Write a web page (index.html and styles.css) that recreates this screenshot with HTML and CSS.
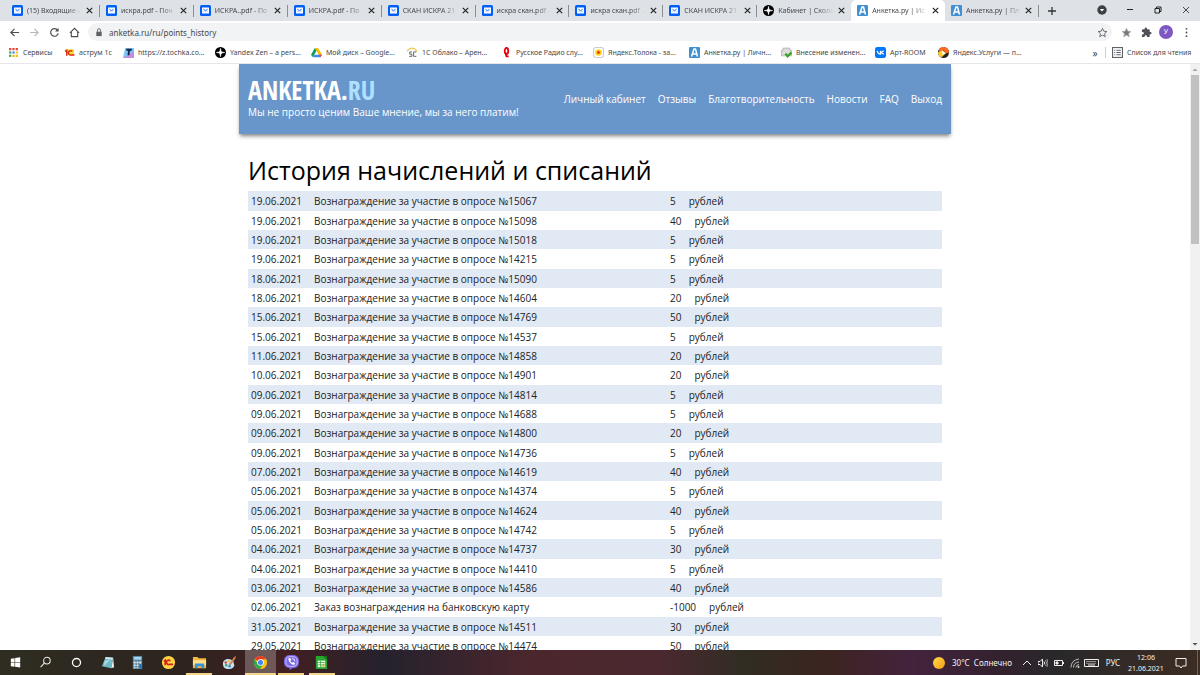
FILE: index.html
```html
<!DOCTYPE html>
<html lang="ru">
<head>
    <meta charset="UTF-8">
    <meta name="viewport" content="width=device-width, initial-scale=1.0">
    <title>Анкетка.ру | История начислений и списаний</title>
    <link rel="stylesheet" href="styles.css">
</head>
<body>

    <!-- shared icons -->
    <svg class="sprite" aria-hidden="true">
        <symbol id="mail" viewBox="0 0 22 22">
            <rect width="22" height="22" rx="3" fill="#005ff9"/>
            <rect x="4" y="5" width="14" height="12" fill="#fff"/>
            <path d="M7 8.500l4 3 4-3" fill="none" stroke="#005ff9" stroke-width="2"/>
            <path d="M7 14l1.500-1.500M15 14l-1.500-1.500" fill="none" stroke="#5b98fb" stroke-width="1.400"/>
        </symbol>
        <symbol id="zen" viewBox="0 0 22 22">
            <circle cx="11" cy="11" r="11" fill="#000"/>
            <path d="M11 3c.4 6 2 7.600 8 8-6 .4-7.600 2-8 8-.4-6-2-7.600-8-8 6-.4 7.600-2 8-8z" fill="#fff" stroke="#fff" stroke-width="1.500"/>
        </symbol>
        <symbol id="anketka" viewBox="0 0 22 22">
            <rect width="22" height="22" rx="2" fill="#3f8fd2"/>
            <path d="M5 19L10 4h3l4 15M7 14h8" fill="none" stroke="#fff" stroke-width="3"/>
        </symbol>
        <symbol id="close" viewBox="0 0 10 10">
            <path d="M2 2l6 6M8 2l-6 6" fill="none" stroke="currentColor" stroke-width="1.3"/>
        </symbol>
        <symbol id="star" viewBox="0 0 24 24">
            <path d="M12 3l2.8 6.2 6.7.7-5 4.5 1.4 6.6-5.900-3.400L6.100 21l1.400-6.600-5-4.500 6.700-.7z" stroke="currentColor" stroke-width="2"/>
        </symbol>
    </svg>

    <header class="browser">
        <div class="tab-bar">
            <div class="tabs">
                <div class="tab"><svg class="icon"><use href="#mail"/></svg><span class="tab-title">(15) Входящие -</span><button class="tab-close" aria-label="Закрыть"><svg><use href="#close"/></svg></button></div>
                <div class="tab"><svg class="icon"><use href="#mail"/></svg><span class="tab-title">искра.pdf - Поч</span><button class="tab-close" aria-label="Закрыть"><svg><use href="#close"/></svg></button></div>
                <div class="tab"><svg class="icon"><use href="#mail"/></svg><span class="tab-title">ИСКРА..pdf - По</span><button class="tab-close" aria-label="Закрыть"><svg><use href="#close"/></svg></button></div>
                <div class="tab"><svg class="icon"><use href="#mail"/></svg><span class="tab-title">ИСКРА.pdf - По</span><button class="tab-close" aria-label="Закрыть"><svg><use href="#close"/></svg></button></div>
                <div class="tab"><svg class="icon"><use href="#mail"/></svg><span class="tab-title">СКАН ИСКРА 21</span><button class="tab-close" aria-label="Закрыть"><svg><use href="#close"/></svg></button></div>
                <div class="tab"><svg class="icon"><use href="#mail"/></svg><span class="tab-title">искра скан.pdf -</span><button class="tab-close" aria-label="Закрыть"><svg><use href="#close"/></svg></button></div>
                <div class="tab"><svg class="icon"><use href="#mail"/></svg><span class="tab-title">искра скан.pdf -</span><button class="tab-close" aria-label="Закрыть"><svg><use href="#close"/></svg></button></div>
                <div class="tab"><svg class="icon"><use href="#mail"/></svg><span class="tab-title">СКАН ИСКРА 21</span><button class="tab-close" aria-label="Закрыть"><svg><use href="#close"/></svg></button></div>
                <div class="tab before-active"><svg class="icon"><use href="#zen"/></svg><span class="tab-title">Кабинет | Сколь</span><button class="tab-close" aria-label="Закрыть"><svg><use href="#close"/></svg></button></div>
                <div class="tab active"><svg class="icon"><use href="#anketka"/></svg><span class="tab-title">Анкетка.ру | Ис</span><button class="tab-close" aria-label="Закрыть"><svg><use href="#close"/></svg></button></div>
                <div class="tab"><svg class="icon"><use href="#anketka"/></svg><span class="tab-title">Анкетка.ру | Пл</span><button class="tab-close" aria-label="Закрыть"><svg><use href="#close"/></svg></button></div>
            </div>
            <button class="new-tab" aria-label="Новая вкладка"><svg viewBox="0 0 10 10"><path d="M5 1v8M1 5h8" stroke="currentColor" stroke-width="1.3"/></svg></button>
            <div class="window-buttons">
                <button aria-label="Поиск вкладок"><svg viewBox="0 0 10 10"><circle cx="5" cy="5" r="4.700" fill="#3c4043"/><path d="M2.800 4h4.400L5 6.500z" fill="#fff"/></svg></button>
                <button aria-label="Свернуть"><svg viewBox="0 0 10 10"><path d="M2 4.500h6" stroke="#222"/></svg></button>
                <button aria-label="Восстановить"><svg viewBox="0 0 10 10" fill="none" stroke="#222"><path d="M2 3.500h4.500V8H2zM3.500 3.500V2H8v4.500H6.500"/></svg></button>
                <button aria-label="Закрыть окно"><svg viewBox="0 0 10 10"><path d="M2 2l6 6M8 2l-6 6" stroke="#222" stroke-width=".8"/></svg></button>
            </div>
        </div>

        <div class="toolbar">
            <button class="tool" aria-label="Назад"><svg viewBox="0 0 12 12"><path d="M11 6H2M6 2L2 6l4 4" fill="none" stroke="#4a4d51" stroke-width="1.300"/></svg></button>
            <button class="tool" aria-label="Вперёд"><svg viewBox="0 0 12 12"><path d="M1 6h9M6 2l4 4-4 4" fill="none" stroke="#b5b8bc" stroke-width="1.300"/></svg></button>
            <button class="tool" aria-label="Обновить"><svg viewBox="0 0 12 12"><path d="M9.500 3.500A4.200 4.200 0 1 0 10.100 7" fill="none" stroke="#4a4d51" stroke-width="1.300"/><path d="M10.500 1v4h-4z" fill="#4a4d51"/></svg></button>
            <button class="tool" aria-label="Домой"><svg viewBox="0 0 12 12"><path d="M1 6.500L6 1.500l5 5M2.500 5.500v5h7v-5" fill="none" stroke="#4a4d51" stroke-width="1.200"/></svg></button>
            <div class="omnibox">
                <svg class="lock" viewBox="0 0 8 10"><path d="M1 4h6v5H1z" fill="#5f6368"/><path d="M2.300 4V2.500a1.700 1.700 0 0 1 3.400 0V4" fill="none" stroke="#5f6368"/></svg>
                <input class="url" type="text" value="anketka.ru/ru/points_history" aria-label="Адресная строка">
                <button class="tool" aria-label="В закладки"><svg fill="none" color="#5f6368"><use href="#star"/></svg></button>
            </div>
            <button class="tool" aria-label="Избранное"><svg fill="#777" color="#aaa"><use href="#star"/></svg></button>
            <button class="tool" aria-label="Расширения"><svg viewBox="0 0 24 24"><path d="M20.500 11H19V7a2 2 0 0 0-2-2h-4V3.500a2.500 2.500 0 0 0-5 0V5H4a2 2 0 0 0-2 2v3.800h1.500a2.700 2.700 0 0 1 0 5.400H2V20a2 2 0 0 0 2 2h3.800v-1.500a2.700 2.700 0 0 1 5.400 0V22H17a2 2 0 0 0 2-2v-4h1.500a2.500 2.500 0 0 0 0-5z" fill="#4f5358"/></svg></button>
            <button class="tool" aria-label="Профиль"><span class="avatar">У</span></button>
            <button class="tool" aria-label="Меню"><svg viewBox="0 0 12 12" fill="#4a4d51"><circle cx="6" cy="2" r="1"/><circle cx="6" cy="6" r="1"/><circle cx="6" cy="10" r="1"/></svg></button>
        </div>

        <nav class="bookmarks" aria-label="Закладки">
            <a href="#"><svg class="icon" viewBox="0 0 10 10"><g fill="#ea4335"><path d="M1 1h2v2H1zM4 1h2v2H4zM7 1h2v2H7z"/></g><path d="M1 4h2v2H1z" fill="#34a853"/><path d="M4 4h2v2H4z" fill="#4285f4"/><path d="M7 4h2v2H7zM7 7h2v2H7zM4 7h2v2H4z" fill="#fbbc04"/><path d="M1 7h2v2H1z" fill="#34a853"/></svg>Сервисы</a>
            <a href="#"><svg class="icon" viewBox="0 0 10 10"><path d="M1 2h8v5H4z" fill="#ffdd2d"/><path d="M1 4l1.500-1v5M7.500 4a2 2 0 1 0-1 3.300h3" fill="none" stroke="#d9230f" stroke-width="1.300"/></svg>аструм 1с</a>
            <a href="#"><svg class="icon" viewBox="0 0 10 10"><path d="M2 1h8v9H0z" fill="#77c6f3"/><path d="M5 7l5-3v6H0z" fill="#c58ce4"/><path d="M3 2.500h5M5.500 2.500L5 7.500" stroke="#15234d" stroke-width="1.700"/></svg>https://z.tochka.co...</a>
            <a href="#"><svg class="icon"><use href="#zen"/></svg>Yandex Zen – a pers...</a>
            <a href="#"><svg class="icon" viewBox="0 0 10 10"><path d="M3.500 1h3L10 7H7z" fill="#fbbc04"/><path d="M3.500 1L5 3.500 1.700 9.300 0 7z" fill="#0f9d58"/><path d="M3.200 7H10L8.500 9.300H1.700z" fill="#4285f4"/><path d="M7 7h3L8.500 9.300z" fill="#ea4335"/></svg>Мой диск – Google...</a>
            <a href="#"><svg class="icon" viewBox="0 0 10 10" fill="none"><path d="M0 4c2-4 7-4 9 0" stroke="#f4c64e"/><path d="M4.500 4.500H2.500v2h2v2H2M8.500 4.500H6v4h2.500" stroke="#555" stroke-width=".8"/></svg>1С Облако – Арен...</a>
            <a href="#"><svg class="icon" viewBox="0 0 10 10" fill="none" stroke="#e30613" stroke-width="1.700"><ellipse cx="5" cy="3.700" rx="1.600" ry="2.800"/><path d="M4 5l1 3.500h2"/></svg>Русское Радио слу...</a>
            <a href="#"><svg class="icon" viewBox="0 0 10 10"><rect x=".5" y=".5" width="9" height="9" rx="2" fill="#fff" stroke="#ccc"/><circle cx="5" cy="5" r="3" fill="#ffcf20"/><circle cx="5" cy="5" r="1.300" fill="#e7361b"/></svg>Яндекс.Толока - за...</a>
            <a href="#"><svg class="icon"><use href="#anketka"/></svg>Анкетка.ру | Личн...</a>
            <a href="#"><svg class="icon" viewBox="0 0 10 10"><path d="M2 1h6v2h1.500v5h-9V3H2z" fill="#ddd" stroke="#aaa" stroke-width=".7"/><path d="M4 6l2 2.500L9.500 5" fill="none" stroke="#35a321" stroke-width="2"/></svg>Внесение изменен...</a>
            <a href="#"><svg class="icon" viewBox="0 0 10 10"><rect width="10" height="10" rx="2" fill="#07f"/><path d="M2 3.500c.5 2 1.500 3 3 3v-3M8 3.500L5.500 5 8 6.700" fill="none" stroke="#fff" stroke-width="1.100"/></svg>Арт-ROOM</a>
            <a href="#"><svg class="icon" viewBox="0 0 10 10"><circle cx="5" cy="5" r="5" fill="#222"/><path d="M1 2a5 5 0 0 1 9 3L7 6 5 3 1 5z" fill="#fc6b21"/><path d="M0 5l4-2 3 3-4 3.500A5 5 0 0 1 0 5z" fill="#ffcc35"/><path d="M4 3l3 3-3 1z" fill="#fff"/></svg>Яндекс.Услуги — п...</a>
            <button class="more" aria-label="Другие закладки">»</button>
            <a class="reading-list" href="#"><svg class="icon" viewBox="0 0 10 10" fill="none" stroke="#5f6368"><rect x=".5" y=".5" width="9" height="9"/><path d="M2 3h1M4 3h4M2 5h1M4 5h4M2 7h1M4 7h4"/></svg>Список для чтения</a>
        </nav>
    </header>

    <main class="viewport">
        <div class="page">
            <div class="site-header">
                <div class="brand">
                    <a class="logo" href="#">ANKETKA.<span>RU</span></a>
                    <div class="slogan">Мы не просто ценим Ваше мнение, мы за него платим!</div>
                </div>
                <nav class="menu">
                    <a href="#">Личный кабинет</a>
                    <a href="#">Отзывы</a>
                    <a href="#">Благотворительность</a>
                    <a href="#">Новости</a>
                    <a href="#">FAQ</a>
                    <a href="#">Выход</a>
                </nav>
            </div>

            <div class="content">
                <h1>История начислений и списаний</h1>
                <table class="history">
                    <tr><td class="date">19.06.2021</td><td>Вознаграждение за участие в опросе №15067</td><td class="sum">5<span>рублей</span></td></tr>
                    <tr><td class="date">19.06.2021</td><td>Вознаграждение за участие в опросе №15098</td><td class="sum">40<span>рублей</span></td></tr>
                    <tr><td class="date">19.06.2021</td><td>Вознаграждение за участие в опросе №15018</td><td class="sum">5<span>рублей</span></td></tr>
                    <tr><td class="date">19.06.2021</td><td>Вознаграждение за участие в опросе №14215</td><td class="sum">5<span>рублей</span></td></tr>
                    <tr><td class="date">18.06.2021</td><td>Вознаграждение за участие в опросе №15090</td><td class="sum">5<span>рублей</span></td></tr>
                    <tr><td class="date">18.06.2021</td><td>Вознаграждение за участие в опросе №14604</td><td class="sum">20<span>рублей</span></td></tr>
                    <tr><td class="date">15.06.2021</td><td>Вознаграждение за участие в опросе №14769</td><td class="sum">50<span>рублей</span></td></tr>
                    <tr><td class="date">15.06.2021</td><td>Вознаграждение за участие в опросе №14537</td><td class="sum">5<span>рублей</span></td></tr>
                    <tr><td class="date">11.06.2021</td><td>Вознаграждение за участие в опросе №14858</td><td class="sum">20<span>рублей</span></td></tr>
                    <tr><td class="date">10.06.2021</td><td>Вознаграждение за участие в опросе №14901</td><td class="sum">20<span>рублей</span></td></tr>
                    <tr><td class="date">09.06.2021</td><td>Вознаграждение за участие в опросе №14814</td><td class="sum">5<span>рублей</span></td></tr>
                    <tr><td class="date">09.06.2021</td><td>Вознаграждение за участие в опросе №14688</td><td class="sum">5<span>рублей</span></td></tr>
                    <tr><td class="date">09.06.2021</td><td>Вознаграждение за участие в опросе №14800</td><td class="sum">20<span>рублей</span></td></tr>
                    <tr><td class="date">09.06.2021</td><td>Вознаграждение за участие в опросе №14736</td><td class="sum">5<span>рублей</span></td></tr>
                    <tr><td class="date">07.06.2021</td><td>Вознаграждение за участие в опросе №14619</td><td class="sum">40<span>рублей</span></td></tr>
                    <tr><td class="date">05.06.2021</td><td>Вознаграждение за участие в опросе №14374</td><td class="sum">5<span>рублей</span></td></tr>
                    <tr><td class="date">05.06.2021</td><td>Вознаграждение за участие в опросе №14624</td><td class="sum">40<span>рублей</span></td></tr>
                    <tr><td class="date">05.06.2021</td><td>Вознаграждение за участие в опросе №14742</td><td class="sum">5<span>рублей</span></td></tr>
                    <tr><td class="date">04.06.2021</td><td>Вознаграждение за участие в опросе №14737</td><td class="sum">30<span>рублей</span></td></tr>
                    <tr><td class="date">04.06.2021</td><td>Вознаграждение за участие в опросе №14410</td><td class="sum">5<span>рублей</span></td></tr>
                    <tr><td class="date">03.06.2021</td><td>Вознаграждение за участие в опросе №14586</td><td class="sum">40<span>рублей</span></td></tr>
                    <tr><td class="date">02.06.2021</td><td>Заказ вознаграждения на банковскую карту</td><td class="sum">-1000<span>рублей</span></td></tr>
                    <tr><td class="date">31.05.2021</td><td>Вознаграждение за участие в опросе №14511</td><td class="sum">30<span>рублей</span></td></tr>
                    <tr><td class="date">29.05.2021</td><td>Вознаграждение за участие в опросе №14474</td><td class="sum">50<span>рублей</span></td></tr>
                </table>
            </div>
        </div>

        <div class="scrollbar">
            <svg viewBox="0 0 10 10"><path d="M2.500 6.500L5 4l2.500 2.500z" fill="#a3a3a3"/></svg>
            <div class="track"><div class="thumb"></div></div>
            <svg viewBox="0 0 10 10"><path d="M2.500 3.500L5 6l2.500-2.500z" fill="#505050"/></svg>
        </div>
    </main>

    <footer class="taskbar">
        <div class="apps">
            <button aria-label="Пуск"><svg viewBox="0 0 16 16" fill="#fff"><path d="M3 4l4-.6v4.200H3zM7.600 3.300L13 2.500v5.100H7.600zM3 8.200h4v4.300L3 12zM7.600 8.200H13v5.200l-5.400-.8z"/></svg></button>
            <button aria-label="Поиск"><svg viewBox="0 0 16 16" fill="none" stroke="#eee" stroke-width="1.100"><circle cx="9.500" cy="6" r="3.500"/><path d="M7 8.500L2.800 13"/></svg></button>
            <button aria-label="Кортана"><svg viewBox="0 0 16 16"><circle cx="8" cy="8" r="4.300" fill="none" stroke="#fff" stroke-width="1.400"/></svg></button>
            <button aria-label="Блокнот"><svg viewBox="0 0 16 16"><path d="M6 2l8 1-2 11-10-2z" fill="#72b9c9"/><path d="M6 2l8 1-.5 2-8-1z" fill="#d7e8ec"/><path d="M12 14l2-11 1 10z" fill="#e9eff1"/><path d="M5 6l6-1-7 7z" fill="#a7dbe4"/></svg></button>
            <button aria-label="Калькулятор"><svg viewBox="0 0 16 16"><rect x="3" y="1" width="10" height="14" fill="#587f98"/><rect x="4" y="2" width="8" height="3" fill="#9ed8f4"/><path d="M4 7h2v2H4zM7 7h2v2H7zM10 7h2v2h-2zM4 10h2v2H4zM7 10h2v2H7zM4 13h2v1H4zM7 13h2v1H7z" fill="#e8f1f5"/><path d="M10 10h2v4h-2z" fill="#1378c8"/></svg></button>
            <button aria-label="1С"><svg viewBox="0 0 16 16"><circle cx="8" cy="8" r="7" fill="#ffd546"/><path d="M3 6.500l1.500-1V11M10 6.500A2.300 2.300 0 1 0 9 10h4" fill="none" stroke="#d7201b" stroke-width="1.700"/></svg></button>
            <button class="open" aria-label="Проводник"><svg viewBox="0 0 16 16"><path d="M1 2h5l1 1.500h8V14H1z" fill="#f3b83f"/><path d="M1 5.500h14V11H1z" fill="#ffe08a"/><path d="M3 14V9h10v5h-3v-2H6v2z" fill="#3793dc"/></svg></button>
            <button aria-label="Paint"><svg viewBox="0 0 16 16"><path d="M1 9c0-4 5-6 9-4 3 1 2 3 3 5s-2 5-6 5-6-2-6-6z" fill="#c5e1f2"/><circle cx="4" cy="8" r="1.300" fill="#e34234"/><circle cx="7" cy="6.500" r="1.200" fill="#eec32f"/><circle cx="4.500" cy="11" r="1.300" fill="#3aa657"/><circle cx="8" cy="12" r="1.300" fill="#2c86d6"/><path d="M7 10l6-8 2-1-1 3-5 7z" fill="#ce874d"/></svg></button>
            <button class="open current" aria-label="Chrome"><svg viewBox="0 0 16 16"><circle cx="8" cy="8" r="7" fill="#fbc116"/><path d="M8 8L1.900 4.500A7 7 0 0 1 14.100 4.500H8z" fill="#e33b2e"/><path d="M1.900 4.500A7 7 0 0 0 7.500 15L11 9.700 8 8 5 9.700z" fill="#2da94f"/><circle cx="8" cy="8" r="3.500" fill="#fff"/><circle cx="8" cy="8" r="2.700" fill="#4285f4"/></svg></button>
            <button class="open" aria-label="Viber"><svg viewBox="0 0 16 16"><path d="M8 0c6 0 8 2 8 7s-2 7-7 7l-3 2v-2c-4-.5-6-2-6-7s2-7 8-7z" fill="#7c68e8"/><path d="M8 1.700c4.500 0 6 1.300 6 5.300s-1.500 5.200-6 5.200S2 11 2 7s1.500-5.300 6-5.300z" fill="none" stroke="#d9d2ff" stroke-width=".9"/><path d="M5 3.500c-1.500 2 3 7.500 6 7l.7-1.800-1.700-1.200-1.200.8C7.700 8 7 7 6.700 6l1-.8-1-1.900z" fill="#fff"/><path d="M8.500 3.800a3 3 0 0 1 3 3" fill="none" stroke="#fff" stroke-width=".9"/></svg></button>
            <button class="open" aria-label="Calc"><svg viewBox="0 0 16 16"><path d="M2 1h8l4 4v10H2z" fill="#28a52c"/><path d="M10 1h4v4z" fill="#0f7a16"/><path d="M4 6h8v7H4z" fill="#fff"/><path d="M4 8h8M4 10.500h8M7 6v7" stroke="#28a52c" stroke-width=".8"/><path d="M8 11h1v2H8zM10 9h1v4h-1z" fill="#d78b1c"/></svg></button>
        </div>
        <div class="tray">
            <span class="sun"></span>
            <span class="weather">30°C&nbsp; Солнечно</span>
            <button aria-label="Скрытые значки"><svg viewBox="0 0 10 10"><path d="M1 7l4-4 4 4"/></svg></button>
            <button aria-label="Громкость"><svg viewBox="0 0 10 10"><path d="M0 3.500h2L4.500 1v8L2 6.500H0zM6 3.500q1 1.500 0 3"/><path d="M7.500 2q2 3 0 6M9 1q2 4 0 8" stroke="#999"/></svg></button>
            <button aria-label="Батарея"><svg viewBox="0 0 10 10"><path d="M.5 2.500h8v5h-8zM9.500 4v2"/><path d="M2 4h2v2H2z" fill="#eee"/></svg></button>
            <button aria-label="Сеть"><svg viewBox="0 0 10 10"><path d="M1 9.500Q1 2 9 1M3.500 9.500Q3.500 4.500 9 4M6 9.500Q6 7 9 6.500" stroke="#bbb"/><circle cx="8.500" cy="9" r=".7"/></svg></button>
            <button class="keyboard" aria-label="Клавиатура"><svg viewBox="0 0 15 10"><path d="M.5 1.500h14v7H.5zM4 7h7"/><path d="M2.500 3.500h10M2.500 5.300h10" stroke-dasharray="1 1"/></svg></button>
            <button class="lang">РУС</button>
            <div class="clock">12:06<br>21.06.2021</div>
            <button class="notify" aria-label="Уведомления"><svg viewBox="0 0 12 12"><path d="M1 1.500h10v7.500H7.500L6 11 4.500 9H1z"/></svg></button>
        </div>
    </footer>

</body>
</html>
```

FILE: styles.css
```css
* {
    box-sizing: border-box;
}

body {
    margin: 0;
    height: 100vh;
    display: flex;
    flex-direction: column;
    overflow: hidden;
    font-family: "Open Sans", "Noto Sans", sans-serif;
    background-color: #fff;
}

a {
    color: inherit;
    text-decoration: none;
}

button {
    display: flex;
    align-items: center;
    justify-content: center;
    padding: 0;
    border: none;
    background: none;
    font: inherit;
    color: inherit;
    cursor: pointer;
}

.sprite {
    display: none;
}

.icon {
    flex: none;
    width: 11px;
    height: 11px;
}

/* browser window */
.browser {
    flex: none;
    font-family: "Noto Sans", sans-serif;
    font-size: 7px;
    color: #45484c;
    border-bottom: 1px solid #e6e7e9;
}

.tab-bar {
    display: flex;
    height: 21px;
    padding-left: 6px;
    background-color: #dee1e6;
}

.tabs {
    display: flex;
    flex: 0 1 1033px;
    min-width: 0;
}

.tab {
    display: flex;
    flex: 1 1 0;
    min-width: 0;
    align-items: center;
    padding: 0 5px 0 6px;
    background: linear-gradient(#8a8d91, #8a8d91) right / 1px 12px no-repeat;
}

.tab.before-active {
    background: none;
}

.tab.active {
    background: #fff;
    border-radius: 5px 5px 0 0;
}

.tab-title {
    flex: 1;
    margin-left: 4px;
    white-space: nowrap;
    -webkit-mask-image: linear-gradient(to right, #000 70%, transparent);
    mask-image: linear-gradient(to right, #000 70%, transparent);
}

.tab-close {
    width: 10px;
    margin-left: 2px;
    color: #222;
}

.tab-close svg {
    width: 9px;
    height: 9px;
}

.new-tab {
    width: 26px;
    color: #333;
}

.new-tab svg {
    width: 10px;
    height: 10px;
}

.window-buttons {
    display: flex;
    margin-left: auto;
}

.window-buttons button {
    width: 28px;
    height: 20px;
}

.window-buttons svg {
    width: 10px;
    height: 10px;
}

.toolbar {
    display: flex;
    align-items: center;
    height: 22px;
    padding: 0 4px;
}

.tool {
    flex: none;
    width: 20px;
    height: 18px;
}

.tool svg {
    width: 11px;
    height: 11px;
}

.omnibox {
    display: flex;
    flex: 1;
    align-items: center;
    height: 18px;
    margin: 0 4px;
    padding-left: 7px;
    border-radius: 9px;
    background-color: #f1f3f4;
}

.lock {
    width: 8px;
    height: 9px;
}

.url {
    flex: 1;
    margin-left: 6px;
    padding: 0;
    border: none;
    outline: none;
    background: none;
    font: 8px "Noto Sans", sans-serif;
    color: #45484c;
}

.avatar {
    width: 14px;
    height: 14px;
    border-radius: 50%;
    background-color: #7e57c2;
    color: #fff;
    font-size: 7px;
    line-height: 14px;
}

.bookmarks {
    display: grid;
    grid-template-columns: 56px 59px 92px 96px 96px 94px 92px 96px 92px 94px 63px 1fr 20px 95px;
    align-items: center;
    height: 20px;
    padding: 0 0 1px 8px;
    white-space: nowrap;
}

.bookmarks a {
    display: flex;
    align-items: center;
    gap: 4px;
}

.bookmarks .more {
    font-size: 10px;
}

.bookmarks .reading-list {
    padding-left: 6px;
    border-left: 1px solid #ccc;
}

/* page */
.viewport {
    display: flex;
    flex: 1;
    min-height: 0;
}

.page {
    flex: 1;
    overflow: hidden;
}

.site-header {
    display: flex;
    align-items: center;
    justify-content: space-between;
    max-width: 712px;
    height: 70px;
    margin: 0 auto;
    padding: 0 9px;
    background-color: #6896cb;
    box-shadow: 0 3px 4px -1px rgba(0, 0, 0, 0.5);
    color: #fff;
}

.brand {
    padding-bottom: 3px;
}

.logo {
    display: block;
    font-family: "Open Sans Condensed", "Roboto Condensed", "Liberation Sans Narrow", "Open Sans", sans-serif;
    font-size: 26px;
    font-weight: bold;
    line-height: 28px;
}

.logo span {
    color: #aee0ff;
}

.slogan {
    font-size: 10px;
    font-weight: 500;
    line-height: 16px;
}

.menu {
    display: flex;
    gap: 12px;
    font-size: 10px;
    font-weight: 500;
}

.content {
    max-width: 712px;
    margin: 0 auto;
    padding: 18px 9px 0;
}

h1 {
    margin: 0 0 2px;
    font-size: 25px;
    font-weight: normal;
    line-height: 37px;
    color: #000;
}

.history {
    width: 100%;
    table-layout: fixed;
    border-collapse: collapse;
    font-size: 10px;
    line-height: 18px;
    color: #222;
}

.history tr {
    height: 19px;
}

.history tr:nth-child(3n + 1) {
    height: 20px;
}

.history tr:nth-child(odd) {
    background-color: #e1e9f5;
}

.history td {
    padding: 0 3px;
    white-space: nowrap;
}

.history .date {
    width: 63px;
}

.history .sum {
    width: 275px;
}

.sum span {
    margin-left: 13px;
}

.scrollbar {
    display: flex;
    flex-direction: column;
    width: 10px;
    background-color: #f1f1f1;
}

.scrollbar svg {
    width: 10px;
    height: 11px;
}

.track {
    flex: 1;
    padding: 0 1px;
}

.thumb {
    height: 30%;
    background-color: #c1c1c1;
}

/* taskbar */
.taskbar {
    display: flex;
    flex: none;
    justify-content: space-between;
    height: 25px;
    background: linear-gradient(to right, #2f2d22 0, #2d241e 15%, #421f22 24%, #25222d 32%, #4b262d 44%, #4b282f 55%, #302d23 62%, #3c2420 69%, #43233d 76%, #34212f 83%, #29282a 88%, #3c2d23 100%);
    color: #f2f2f2;
}

.apps {
    display: grid;
    grid-template-columns: repeat(11, 1fr);
    width: 337px;
}

.apps svg {
    width: 15px;
    height: 15px;
}

.apps .open {
    background: linear-gradient(#f5d58c, #f5d58c) bottom / 26px 2px no-repeat;
}

.apps .current {
    background: linear-gradient(#f5d58c, #f5d58c) bottom / 100% 2px no-repeat rgba(255, 255, 255, 0.25);
}

.tray {
    display: flex;
    align-items: center;
    padding-right: 2px;
    font-family: "Noto Sans", sans-serif;
    font-size: 8px;
}

.tray button {
    width: 16px;
    height: 25px;
}

.tray svg {
    width: 10px;
    height: 10px;
    fill: none;
    stroke: #eee;
    stroke-width: 1;
}

.sun {
    width: 12px;
    height: 12px;
    margin-right: 7px;
    border-radius: 50%;
    background: linear-gradient(135deg, #ffdc4a, #f79a16);
}

.weather {
    margin-right: 7px;
}

.tray .keyboard svg {
    width: 15px;
}

.tray .lang {
    width: 28px;
}

.clock {
    width: 38px;
    font-size: 7px;
    line-height: 11px;
    text-align: center;
}

.tray .notify {
    width: 33px;
    border-right: 1px solid #6d655e;
}

.tray .notify svg {
    width: 12px;
    height: 12px;
}
```
